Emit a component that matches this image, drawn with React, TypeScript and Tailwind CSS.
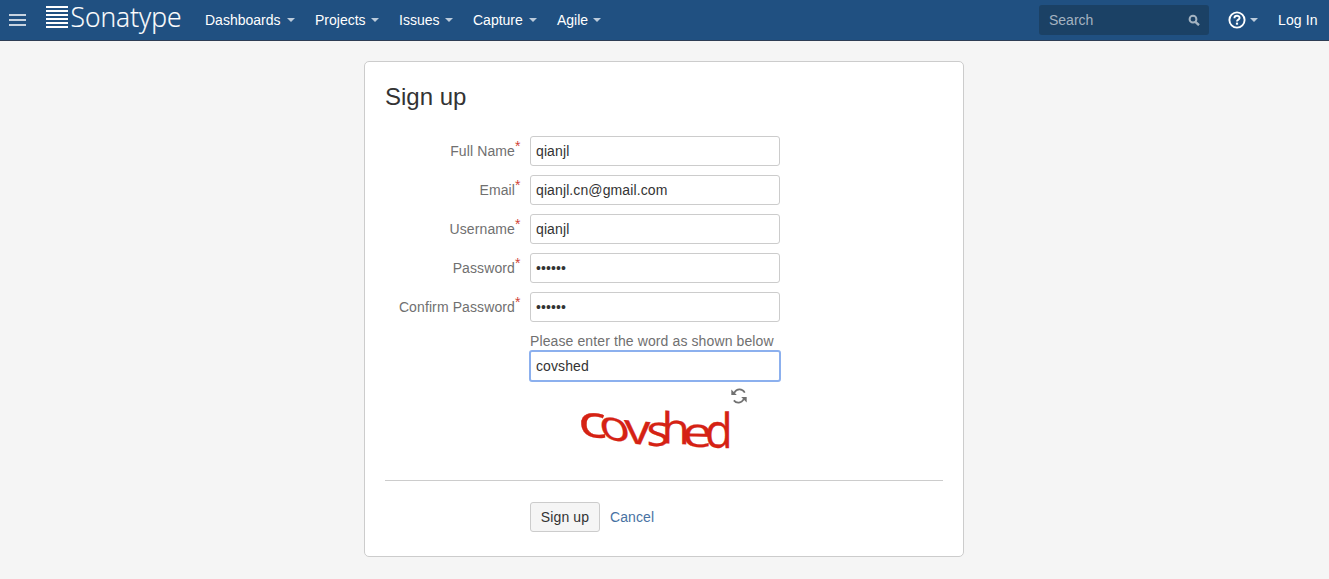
import React from 'react';

const Caret = () => (
  <span className="h-0 w-0 border-x-4 border-t-4 border-x-transparent border-t-[#bccbdb]" />
);

const menu = [
  { label: 'Dashboards', width: 'w-[90px]' },
  { label: 'Projects', width: 'w-[64px]' },
  { label: 'Issues', width: 'w-[54px]' },
  { label: 'Capture', width: 'w-[64px]' },
  { label: 'Agile', width: 'w-[44px]' },
];

const captcha = [
  { ch: 'c', m: 'matrix(1.42 0.12 0.08 1.06 16 49)' },
  { ch: 'o', m: 'matrix(1.22 0.2 0.16 1 38 51)' },
  { ch: 'v', m: 'matrix(1.25 0.1 0.04 1.02 62 56)' },
  { ch: 's', m: 'matrix(1.15 -0.02 0 1.02 83.5 59)' },
  { ch: 'h', m: 'matrix(1.1 0.06 0 1.02 98.5 56)' },
  { ch: 'e', m: 'matrix(1.3 0.03 0 0.98 119 59.5)' },
  { ch: 'd', m: 'matrix(1.08 0 0 1.12 142 60.5)' },
];

function Logo() {
  return (
    <svg width="150" height="40" viewBox="0 0 150 40" className="block overflow-visible" aria-label="Sonatype">
      {[0, 4, 8, 12, 16, 20].map((y) => (
        <rect key={y} x="1" y={y + 6} width="22" height="2" fill="#fff" />
      ))}
      <text x="25.5" y="26.8" fill="#fff" stroke="#fff" strokeWidth="0.2" fontFamily="'Open Sans', sans-serif" fontWeight="300" fontSize="28" textLength="111" lengthAdjust="spacingAndGlyphs">
        Sonatype
      </text>
    </svg>
  );
}

function Field({ label, value, type = 'text' }: { label: string; value: string; type?: string }) {
  return (
    <div className="mb-[9px] flex h-[30px]">
      <label className="flex w-[135px] items-center justify-end text-[#707070]">
        <span>{label}</span>
        <span className="mt-[-11px] w-[5px] text-[14px] leading-[14px] tracking-normal text-[#d04437]">*</span>
      </label>
      <input
        type={type}
        defaultValue={value}
        className="ml-[10px] h-[30px] w-[250px] rounded-[3px] border border-[#ccc] bg-white px-[5px] text-[14px] text-[#333] outline-none"
      />
    </div>
  );
}

export default function App() {
  return (
    <div className="flex h-[579px] flex-col overflow-hidden bg-[#f5f5f5] font-['Liberation_Sans',Arial,sans-serif] text-[14px] leading-5 text-[#333]">
      <header className="flex h-[41px] shrink-0 items-center border-b border-[#2e3d54] bg-[#205081] text-white">
        <div className="ml-[9px] flex w-[17px] flex-col gap-[3px]">
          <span className="h-[2px] bg-[#c7d3e0]" />
          <span className="h-[2px] bg-[#c7d3e0]" />
          <span className="h-[2px] bg-[#c7d3e0]" />
        </div>
        <div className="ml-[19px] h-[40px]">
          <Logo />
        </div>
        <nav className="ml-[10px] flex gap-5">
          {menu.map(({ label, width }) => (
            <a key={label} className={`flex items-center justify-between ${width}`}>
              {label}
              <Caret />
            </a>
          ))}
        </nav>
        <div className="ml-auto flex h-[30px] w-[170px] items-center justify-between rounded-[3px] bg-[#1b4165] pl-[10px] pr-[9px] text-[#a4b3c1]">
          <span>Search</span>
          <svg width="12" height="12" viewBox="0 0 12 12" fill="none" stroke="#a4b3c1">
            <circle cx="5" cy="5.2" r="3.4" strokeWidth="2" />
            <path d="M7.4 7.8 L11 11.2" strokeWidth="2.4" />
          </svg>
        </div>
        <div className="ml-[19px] flex items-center">
          <svg width="18" height="18" viewBox="0 0 18 18" fill="none" stroke="#fff">
            <circle cx="9" cy="9" r="7.6" strokeWidth="1.9" />
            <path d="M6.4 7.2 C6.4 4 11.6 4.1 11.6 7 C11.6 8.7 9 8.6 9 10.6" strokeWidth="1.9" />
            <path d="M9 11.6 V13.7" strokeWidth="2.2" />
          </svg>
          <span className="ml-[4px] flex">
            <Caret />
          </span>
        </div>
        <a className="ml-5 w-[51px] whitespace-nowrap tracking-[0.1px]">Log In</a>
      </header>

      <main className="ml-[364px] mt-5 h-[496px] w-[600px] shrink-0 rounded-[5px] border border-[#ccc] bg-white px-5 pt-5 tracking-[0.11px]">
        <h2 className="h-[54px] text-[24px] leading-[30px] tracking-normal">Sign up</h2>
        <Field label="Full Name" value="qianjl" />
        <Field label="Email" value="qianjl.cn@gmail.com" />
        <Field label="Username" value="qianjl" />
        <Field label="Password" value="qianjl" type="password" />
        <Field label="Confirm Password" value="qianjl" type="password" />
        <div className="ml-[144px] flex w-[252px] flex-col">
          <label className="ml-px h-[19px] whitespace-nowrap text-[#707070]">Please enter the word as shown below</label>
          <input
            type="text"
            defaultValue="covshed"
            className="h-[32px] w-[252px] rounded-[3px] border-2 border-[#8cb0ee] bg-white px-[5px] text-[14px] text-[#333] outline-none"
          />
          <div className="flex h-[98px] pt-[5px]">
            <svg width="168" height="92" viewBox="0 0 168 92" className="ml-[34px] overflow-visible">
              <g fill="#d52214" stroke="#d52214" strokeWidth="0.3" letterSpacing="0" fontFamily="'Open Sans', sans-serif" fontSize="42">
                {captcha.map(({ ch, m }) => (
                  <text key={ch} transform={m}>
                    {ch}
                  </text>
                ))}
              </g>
            </svg>
            <svg width="16" height="16" viewBox="0 0 16 16" className="mt-px" fill="none" stroke="#707070" strokeWidth="1.7">
              <path d="M3.2 4.8 C5.6 0.6 11 0 13.8 4.6" />
              <path d="M12.8 11.2 C10.4 15.4 5.6 15.8 2.8 12.4" />
              <path d="M0.3 1.4 L5.8 7 L0.3 7 Z" fill="#707070" stroke="none" />
              <path d="M15.7 14.6 L10.2 9 L15.7 9 Z" fill="#707070" stroke="none" />
            </svg>
          </div>
        </div>
        <div className="flex h-[52px] items-end border-t border-[#ccc] pl-[145px]">
          <button className="h-[30px] w-[70px] rounded-[3px] border border-[#ccc] bg-[#f5f5f5]">Sign up</button>
          <a className="ml-[10px] mb-[5px] text-[#4872a3]">Cancel</a>
        </div>
      </main>
    </div>
  );
}
